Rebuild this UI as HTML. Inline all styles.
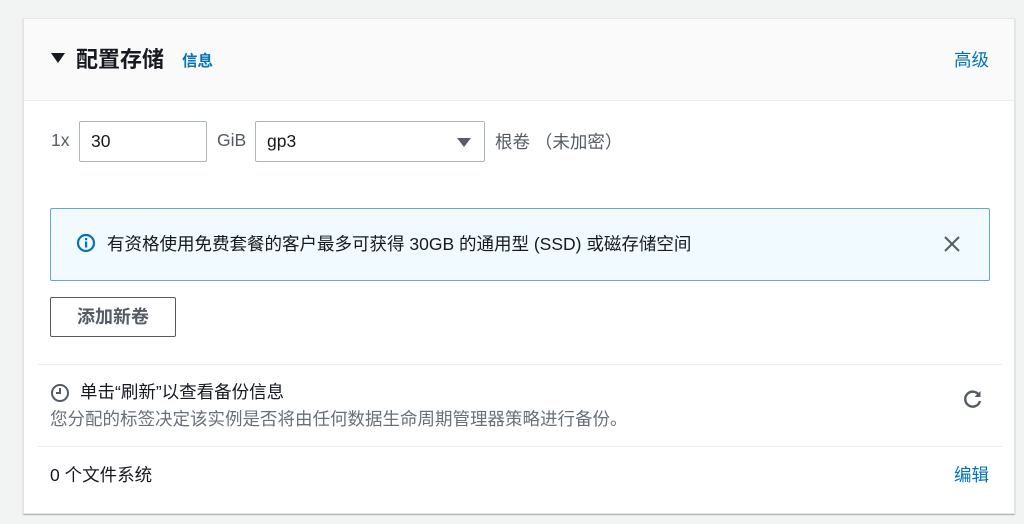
<!DOCTYPE html>
<html><head><meta charset="utf-8"><style>
*{margin:0;padding:0;box-sizing:border-box}
body{width:1024px;height:524px;background:#f2f3f3;font-family:"Liberation Sans","Noto Sans CJK SC",sans-serif;color:#16191f;position:relative;overflow:hidden}
.card{position:absolute;left:23px;top:18px;width:992px;height:496px;background:#fff;border:1px solid #e4e4e4;box-shadow:0 1px 1px rgba(0,0,0,.3)}
.hdr{position:absolute;left:0;top:0;width:100%;height:82px;background:#fafafa;border-bottom:1px solid #eaeded}
.a{position:absolute;white-space:nowrap}
.inp{position:absolute;border:1px solid #aab7b8;border-radius:2px;background:#fff;font-size:17.5px;padding-left:11px;line-height:38px}
.link{color:#0073bb}
</style></head><body>
<div class="card">
<div class="hdr"></div>
<div class="a" style="left:27px;top:34px;width:0;height:0;border-left:7px solid transparent;border-right:7px solid transparent;border-top:10px solid #16191f"></div>
<div class="a" style="left:52px;top:23px;font-size:22px;font-weight:bold">配置存储</div>
<div class="a link" style="left:158px;top:30px;font-size:15.5px;font-weight:bold">信息</div>
<div class="a link" style="left:930px;top:28px;font-size:17.5px">高级</div>
<div class="a" style="left:27px;top:111px;font-size:17.5px;color:#545b64">1x</div>
<div class="inp" style="left:55px;top:102px;width:128px;height:41px">30</div>
<div class="a" style="left:193px;top:111px;font-size:17.5px;color:#545b64">GiB</div>
<div class="inp" style="left:231px;top:102px;width:230px;height:41px">gp3</div>
<div class="a" style="left:433px;top:119px;width:0;height:0;border-left:7px solid transparent;border-right:7px solid transparent;border-top:9px solid #545b64"></div>
<div class="a" style="left:471px;top:110px;font-size:17.5px;color:#545b64">根卷 （未加密）</div>
<div class="a" style="left:26px;top:189px;width:940px;height:73px;background:#f1faff;border:1px solid #62a7d8;border-radius:2px"></div>
<svg class="a" style="left:52px;top:214px" width="20" height="20" viewBox="0 0 20 20"><circle cx="10" cy="10" r="8" fill="none" stroke="#0073bb" stroke-width="2.2"/><rect x="9" y="8.5" width="2.2" height="6" fill="#0073bb"/><rect x="9" y="5" width="2.2" height="2.2" fill="#0073bb"/></svg>
<div class="a" style="left:83px;top:212px;font-size:17.5px">有资格使用免费套餐的客户最多可获得 30GB 的通用型 (SSD) 或磁存储空间</div>
<svg class="a" style="left:918px;top:215px" width="20" height="20" viewBox="0 0 20 20"><path d="M3 3L17 17M17 3L3 17" stroke="#545b64" stroke-width="2"/></svg>
<div class="a" style="left:26px;top:278px;width:126px;height:40px;border:1px solid #545b64;border-radius:2px;font-size:18px;font-weight:bold;color:#545b64;text-align:center;line-height:38px">添加新卷</div>
<div class="a" style="left:14px;top:345px;width:964px;height:1px;background:#eaeded"></div>
<svg class="a" style="left:26px;top:364px" width="20" height="20" viewBox="0 0 20 20"><circle cx="10" cy="10" r="8" fill="none" stroke="#545b64" stroke-width="2"/><path d="M10 5V10H6" fill="none" stroke="#545b64" stroke-width="2"/></svg>
<div class="a" style="left:56px;top:360px;font-size:17.5px">单击“刷新”以查看备份信息</div>
<div class="a" style="left:26px;top:387px;font-size:17.5px;color:#687078">您分配的标签决定该实例是否将由任何数据生命周期管理器策略进行备份。</div>
<svg class="a" style="left:938px;top:369px" width="22" height="22" viewBox="0 0 22 22"><path d="M17 7A7.5 7.5 0 1 0 18 13" fill="none" stroke="#545b64" stroke-width="2.4"/><path d="M18.5 3V9H12.5Z" fill="#545b64"/></svg>
<div class="a" style="left:14px;top:427px;width:964px;height:1px;background:#eaeded"></div>
<div class="a" style="left:26px;top:443px;font-size:17.5px">0 个文件系统</div>
<div class="a link" style="left:930px;top:443px;font-size:17.5px">编辑</div>
</div>
</body></html>
